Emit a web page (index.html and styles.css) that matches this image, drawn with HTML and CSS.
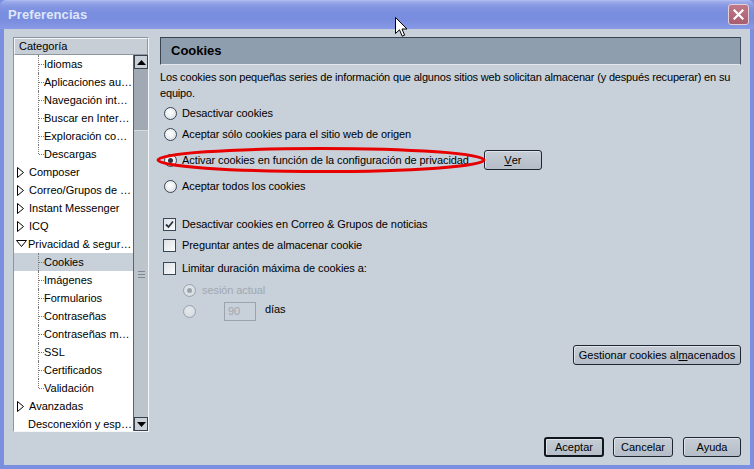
FILE: index.html
```html
<!DOCTYPE html>
<html lang="es">
<head>
<meta charset="utf-8">
<title>Preferencias</title>
<link rel="stylesheet" href="styles.css">
</head>
<body>
<div class="window">
  <div class="titlebar">
    <span class="title">Preferencias</span>
    <span class="close"><svg width="11" height="11" viewBox="0 0 11 11"><path d="M1.5 1.5 L9.5 9.5 M9.5 1.5 L1.5 9.5" stroke="#fff" stroke-width="2.2" stroke-linecap="square"/></svg></span>
  </div>
  <div class="body">
    <div class="main">
      <div class="sidebar">
        <div class="cat-header">Categoría</div>
        <div class="tree-wrap">
          <ul class="tree">
            <li class="child">Idiomas</li>
            <li class="child">Aplicaciones au…</li>
            <li class="child">Navegación int…</li>
            <li class="child">Buscar en Inter…</li>
            <li class="child">Exploración co…</li>
            <li class="child last">Descargas</li>
            <li class="node"><svg class="tw" width="8" height="11" viewBox="0 0 8 11"><path d="M0.5 0.5 L6.5 5.5 L0.5 10.5 Z" fill="#fff" stroke="#000"/></svg>Composer</li>
            <li class="node"><svg class="tw" width="8" height="11" viewBox="0 0 8 11"><path d="M0.5 0.5 L6.5 5.5 L0.5 10.5 Z" fill="#fff" stroke="#000"/></svg>Correo/Grupos de …</li>
            <li class="node"><svg class="tw" width="8" height="11" viewBox="0 0 8 11"><path d="M0.5 0.5 L6.5 5.5 L0.5 10.5 Z" fill="#fff" stroke="#000"/></svg>Instant Messenger</li>
            <li class="node"><svg class="tw" width="8" height="11" viewBox="0 0 8 11"><path d="M0.5 0.5 L6.5 5.5 L0.5 10.5 Z" fill="#fff" stroke="#000"/></svg>ICQ</li>
            <li class="node open"><svg class="tw-open" width="11" height="8" viewBox="0 0 11 8"><path d="M0.5 0.5 L10.5 0.5 L5.5 6.5 Z" fill="#fff" stroke="#000"/></svg>Privacidad &amp; segur…</li>
            <li class="child sel">Cookies</li>
            <li class="child">Imágenes</li>
            <li class="child">Formularios</li>
            <li class="child">Contraseñas</li>
            <li class="child">Contraseñas m…</li>
            <li class="child">SSL</li>
            <li class="child">Certificados</li>
            <li class="child last">Validación</li>
            <li class="node"><svg class="tw" width="8" height="11" viewBox="0 0 8 11"><path d="M0.5 0.5 L6.5 5.5 L0.5 10.5 Z" fill="#fff" stroke="#000"/></svg>Avanzadas</li>
            <li class="leaf">Desconexión y esp…</li>
          </ul>
          <div class="scrollbar">
            <div class="sb-btn"><svg width="9" height="5" viewBox="0 0 9 5"><path d="M0 5 L4.5 0 L9 5 Z" fill="#000"/></svg></div>
            <div class="sb-track"></div>
            <div class="sb-thumb"><span class="grip"></span></div>
            <div class="sb-btn"><svg width="9" height="5" viewBox="0 0 9 5"><path d="M0 0 L9 0 L4.5 5 Z" fill="#000"/></svg></div>
          </div>
        </div>
      </div>

      <div class="content">
        <div class="panel-header">Cookies</div>
        <p class="desc">Los cookies son pequeñas series de información que algunos sitios web solicitan almacenar (y después recuperar) en su<br>equipo.</p>

        <div class="row r1"><span class="radio"></span><span>Desactivar cookies</span></div>
        <div class="row r2"><span class="radio"></span><span>Aceptar sólo cookies para el sitio web de origen</span></div>
        <div class="row r3"><span class="radio checked"></span><span>Activar cookies en función de la configuración de privacidad</span><span class="btn ver"><u>V</u>er</span></div>
        <div class="row r4"><span class="radio"></span><span>Aceptar todos los cookies</span></div>

        <div class="row c1"><span class="check on"><svg width="11" height="11" viewBox="0 0 11 11"><path d="M2 5.5 L4.5 8 L9 2.5" fill="none" stroke="#2b3440" stroke-width="1.8"/></svg></span><span>Desactivar cookies en Correo &amp; Grupos de noticias</span></div>
        <div class="row c2"><span class="check"></span><span>Preguntar antes de almacenar cookie</span></div>
        <div class="row c3"><span class="check"></span><span>Limitar duración máxima de cookies a:</span></div>

        <div class="row s1"><span class="radio disabled checked"></span><span class="dis-text">sesión actual</span></div>
        <div class="row s2"><span class="radio disabled"></span><span class="num">90</span><span class="dias">días</span></div>

        <div class="manage"><span class="btn">Gestionar cookies al<u>m</u>acenados</span></div>
      </div>
    </div>
    <div class="footer">
      <span class="btn default">Aceptar</span>
      <span class="btn cancel">Cancelar</span>
      <span class="btn help">Ayuda</span>
    </div>
  </div>

  <svg class="annot" width="334" height="30" viewBox="0 0 334 30"><ellipse cx="166" cy="13" rx="163" ry="11.5" fill="none" stroke="#e80000" stroke-width="3"/></svg>
  <svg class="cursor" width="14" height="22" viewBox="0 0 14 22"><path d="M0.5 0.5 L0.5 16.5 L4.5 12.8 L7.2 19.2 L9.6 18.2 L7 12 L12 12 Z" fill="#fff" stroke="#000" stroke-width="1"/></svg>
</div>
</body>
</html>
```

FILE: styles.css
```css
* { box-sizing: border-box; margin: 0; padding: 0; }
html, body { width: 754px; height: 469px; overflow: hidden; }
body {
  font-family: "Liberation Sans", Arial, sans-serif;
  font-size: 11px;
  color: #000;
  background: #7a8ee0;
}
.window {
  position: relative;
  width: 754px;
  height: 469px;
  display: flex;
  flex-direction: column;
  background: #7b8fe0;
  border-radius: 6px 6px 0 0;
}
.titlebar {
  height: 29px;
  display: flex;
  align-items: center;
  justify-content: space-between;
  padding: 0 5px 0 8px;
  border-radius: 6px 6px 0 0;
  background: linear-gradient(#b3bff0 0, #9aaaea 2px, #8698e3 6px, #7a8edf 12px, #798ddf 20px, #8597e4 27px, #8a9ce6 29px);
}
.title {
  color: #dfe6fa;
  font-weight: bold;
  font-size: 13px;
  letter-spacing: 0.1px;
}
.close {
  width: 21px;
  height: 21px;
  border: 1px solid #e6d0d8;
  border-radius: 3px;
  background: linear-gradient(#c07888, #a85e70);
  display: flex;
  align-items: center;
  justify-content: center;
}
.body {
  flex: 1;
  margin: 0 4px 4px;
  background: #c8d0d9;
  display: flex;
  flex-direction: column;
  padding: 8px 9px 8px;
}
.main {
  display: flex;
  gap: 11px;
  height: 395px;
}

/* sidebar */
.sidebar {
  width: 136px;
  display: flex;
  flex-direction: column;
  border: 1px solid;
  border-color: #8b96a2 #f4f6f8 #f4f6f8 #8b96a2;
  background: #fff;
  overflow: hidden;
}
.cat-header {
  height: 17px;
  line-height: 15px;
  padding-left: 4px;
  background: #c8ced6;
  border: 1px solid;
  border-color: #f2f4f6 #8e98a2 #8e98a2 #f2f4f6;
}
.tree-wrap {
  flex: 1;
  display: flex;
  overflow: hidden;
}
.tree {
  flex: 1;
  list-style: none;
  overflow: hidden;
}
.tree li {
  position: relative;
  height: 18px;
  line-height: 18px;
  white-space: nowrap;
  display: flex;
  align-items: center;
}
.tree .child { padding-left: 30px; }
.tree .child::before {
  content: "";
  position: absolute;
  left: 24px;
  top: 0;
  bottom: 0;
  border-left: 1px dotted #7a7a7a;
}
.tree .child.last::before { bottom: 9px; }
.tree .child::after {
  content: "";
  position: absolute;
  left: 25px;
  top: 9px;
  width: 5px;
  border-top: 1px dotted #7a7a7a;
}
.tree .sel { background: #c8d0d9; }
.tree .node { padding-left: 3px; }
.tree .node .tw { margin-right: 4px; }
.tree .node .tw-open { margin-right: 1px; margin-left: -1px; }
.tree .leaf { padding-left: 14px; }

.scrollbar {
  width: 15px;
  display: flex;
  flex-direction: column;
  border-left: 1px solid #5a6470;
  background: #a3acb6;
}
.sb-btn {
  height: 14px;
  display: flex;
  align-items: center;
  justify-content: center;
  background: #c9d0d8;
  border: 1px solid #39424c;
}
.sb-track { height: 61px; background: #a1aab4; }
.sb-thumb {
  flex: 1;
  background: #bcc4cc;
  border-top: 1px solid #d4dae0;
  display: flex;
  align-items: center;
  justify-content: center;
}
.grip {
  width: 7px;
  height: 7px;
  background: repeating-linear-gradient(#7e8892 0 1px, transparent 1px 3px);
}

/* content */
.content {
  flex: 1;
  display: flex;
  flex-direction: column;
  align-items: flex-start;
  letter-spacing: -0.08px;
}
.panel-header {
  align-self: stretch;
  height: 28px;
  line-height: 26px;
  padding-left: 10px;
  background: #8e9eae;
  border: 1px solid;
  border-color: #3a4450 #45505c #e4e8ec #3a4450;
  font-weight: bold;
  font-size: 13px;
  letter-spacing: 0;
}
.desc {
  margin-top: 4px;
  line-height: 16px;
  white-space: nowrap;
  letter-spacing: -0.17px;
}
.row {
  display: flex;
  align-items: center;
  height: 20px;
  white-space: nowrap;
}
.r1 { margin-top: 2px; }
.r2 { margin-top: 1px; }
.r3 { margin-top: 6px; }
.r4 { margin-top: 6px; }
.c1 { margin-top: 18px; }
.c2 { margin-top: 1px; }
.c3 { margin-top: 3px; }
.s1 { margin-top: 2px; }
.s2 { margin-top: 1px; }

.radio {
  width: 13px;
  height: 13px;
  border-radius: 50%;
  border: 1px solid #3c4856;
  background: radial-gradient(circle at 45% 40%, #ffffff 0, #f0f2f4 40%, #cdd3da 100%);
  margin: 0 5px 0 4px;
  display: flex;
  align-items: center;
  justify-content: center;
  flex: none;
}
.radio.checked::after {
  content: "";
  width: 5px;
  height: 5px;
  border-radius: 50%;
  background: #2a3440;
}
.radio.disabled {
  border-color: #9aa4ae;
  background: radial-gradient(circle at 45% 40%, #e4e8ec 0, #d2d8de 100%);
  margin-left: 23px;
  margin-right: 6px;
}
.radio.disabled.checked::after { background: #9aa4ae; }
.check {
  width: 13px;
  height: 13px;
  border: 1px solid #3c4856;
  background: linear-gradient(135deg, #dde2e7, #fafbfc);
  margin: 0 6px 0 3px;
  display: flex;
  align-items: center;
  justify-content: center;
  flex: none;
}
.dis-text { color: #a0a9b2; }
.num {
  width: 32px;
  height: 19px;
  margin-left: 22px;
  border: 1px solid #9aa4ae;
  color: #a0a9b2;
  padding-left: 3px;
  line-height: 19px;
  display: flex;
  align-items: center;
}
.dias { margin-left: 9px; margin-top: -5px; }

.btn {
  display: inline-flex;
  align-items: center;
  justify-content: center;
  height: 20px;
  border: 1px solid #1e2630;
  border-radius: 3px;
  background: linear-gradient(#c6cdd6, #b4bdc8);
  box-shadow: inset 1px 1px 0 #dfe4ea;
  white-space: nowrap;
  letter-spacing: 0;
}
.ver { width: 58px; margin-left: 15px; }
.manage {
  align-self: stretch;
  display: flex;
  justify-content: flex-end;
  margin-top: 24px;
}
.manage .btn { width: 168px; }
.footer {
  display: flex;
  justify-content: flex-end;
  margin-top: 5px;
}
.footer .btn { height: 20px; }
.default { width: 60px; border-width: 2px; border-color: #10161e; }
.cancel { width: 60px; margin-left: 9px; }
.help { width: 58px; margin-left: 10px; }

/* overlays */
.annot {
  position: absolute;
  left: 155px;
  top: 147px;
}
.cursor {
  position: absolute;
  left: 395px;
  top: 17px;
}
```
